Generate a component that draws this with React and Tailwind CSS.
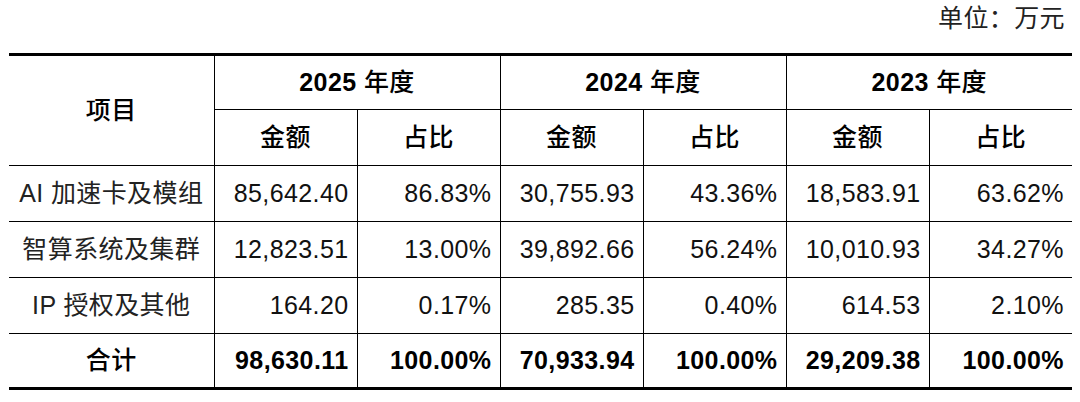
import React from 'react';

const YEARS = ['2025', '2024', '2023'];

const ROWS = [
  { label: 'AI 加速卡及模组', values: ['85,642.40', '86.83%', '30,755.93', '43.36%', '18,583.91', '63.62%'] },
  { label: '智算系统及集群', values: ['12,823.51', '13.00%', '39,892.66', '56.24%', '10,010.93', '34.27%'] },
  { label: 'IP 授权及其他', values: ['164.20', '0.17%', '285.35', '0.40%', '614.53', '2.10%'] },
];

const TOTAL = ['98,630.11', '100.00%', '70,933.94', '100.00%', '29,209.38', '100.00%'];

const font = { fontFamily: '"Liberation Sans", "Noto Sans CJK SC", sans-serif' };

export default function App() {
  return (
    <div className="w-[1080px] h-[402px] bg-white px-[9px] text-[25px] tracking-[0.4px] text-black" style={font}>
      {/* unit caption */}
      <div className="h-[53px] flex justify-end pr-[6px] leading-[36px] text-[#222]">单位：万元</div>

      <table className="w-[1063px] table-fixed border-collapse border-y-[3px] border-black">
        <colgroup>
          <col className="w-[205px]" />
          {[0, 1, 2, 3, 4, 5].map(i => <col key={i} className="w-[143px]" />)}
        </colgroup>
        <thead>
          <tr className="h-[55px]">
            <th rowSpan={2} className="border-r border-b border-black font-medium text-center">项目</th>
            {YEARS.map((y, i) => (
              <th key={y} colSpan={2} className={`border-b border-black text-center font-medium ${i < 2 ? 'border-r' : ''}`}>
                <span className="font-bold">{y}</span> 年度
              </th>
            ))}
          </tr>
          <tr className="h-[56px]">
            {[0, 1, 2, 3, 4, 5].map(i => (
              <th key={i} className={`border-b border-black text-center font-medium ${i < 5 ? 'border-r' : ''}`}>
                {i % 2 === 0 ? '金额' : '占比'}
              </th>
            ))}
          </tr>
        </thead>
        <tbody>
          {ROWS.map(r => (
            <tr key={r.label} className="h-[56px]">
              <td className="border-r border-b border-black text-center text-[#222] whitespace-nowrap">{r.label}</td>
              {r.values.map((v, i) => (
                <td key={i} className={`border-b border-black text-right pr-[8px] text-[#111] ${i < 5 ? 'border-r' : ''}`}>{v}</td>
              ))}
            </tr>
          ))}
          <tr className="h-[55px]">
            <td className="border-r border-black text-center font-medium">合计</td>
            {TOTAL.map((v, i) => (
              <td key={i} className={`border-black text-right pr-[8px] font-bold ${i < 5 ? 'border-r' : ''}`}>{v}</td>
            ))}
          </tr>
        </tbody>
      </table>
    </div>
  );
}
